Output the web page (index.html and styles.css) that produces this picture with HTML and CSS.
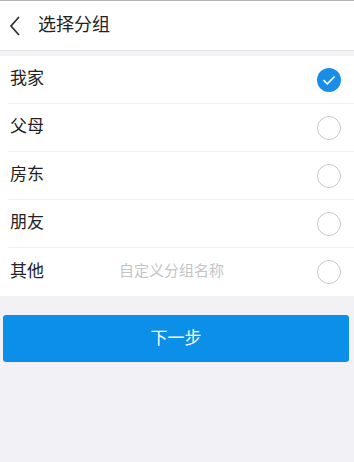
FILE: index.html
```html
<!DOCTYPE html>
<html lang="zh">
<head>
    <meta charset="utf-8">
    <title>选择分组</title>
    <meta content="width=device-width, initial-scale=1" name="viewport" />
    <link rel="stylesheet" href="styles.css">
</head>
<body>
    <header class="top-bar">
        <svg class="back" width="12" height="20" viewBox="0 0 12 20">
            <path d="M10 1 L2 10 L10 19" fill="none" stroke="#333" stroke-width="1.8" />
        </svg>
        <h1>选择分组</h1>
    </header>
    <ul class="group-list">
        <li class="group-item">
            <span class="name">我家</span>
            <span class="check checked">
                <svg width="24" height="24" viewBox="0 0 24 24">
                    <circle cx="12" cy="12" r="12" fill="#1a8ee6" />
                    <path d="M6.5 12.2 L10.3 15.8 L17.5 8.6" fill="none" stroke="#fff" stroke-width="1.6" />
                </svg>
            </span>
        </li>
        <li class="group-item">
            <span class="name">父母</span>
            <span class="check"></span>
        </li>
        <li class="group-item">
            <span class="name">房东</span>
            <span class="check"></span>
        </li>
        <li class="group-item">
            <span class="name">朋友</span>
            <span class="check"></span>
        </li>
        <li class="group-item">
            <span class="name short">其他</span>
            <input class="custom" type="text" placeholder="自定义分组名称">
            <span class="check"></span>
        </li>
    </ul>
    <div class="actions">
        <button class="next-btn">下一步</button>
    </div>
</body>
</html>
```
FILE: styles.css
```css
body {
    margin: 0;
    background: #f2f2f6;
    font-family: "Noto Sans CJK SC", "Noto Sans", sans-serif;
    color: #222;
    border-top: 1px solid #b5b5b5;
}
.top-bar {
    display: flex;
    align-items: center;
    height: 49px;
    background: #fff;
    border-bottom: 1px solid #e2e2e2;
    padding-left: 9px;
}
.top-bar .back {
    margin-right: 17px;
}
.top-bar h1 {
    margin: 0 0 5px;
    font-size: 18px;
    font-weight: normal;
    color: #222;
}
.group-list {
    list-style: none;
    margin: 5px 0 0;
    padding: 0 0 0 8px;
    background: #fff;
}
.group-item {
    display: flex;
    align-items: center;
    height: 48px;
    padding-right: 13px;
    border-bottom: 1px solid #f0f0f0;
    box-sizing: border-box;
}
.group-item:last-child {
    border-bottom: none;
}
.group-item .name {
    font-size: 17px;
    padding-left: 2px;
    margin-bottom: 6px;
    flex: 1;
}
.group-item .name.short {
    flex: 0 0 111px;
    box-sizing: border-box;
}
.group-item .custom {
    flex: 1;
    min-width: 0;
    border: none;
    outline: none;
    font-family: inherit;
    font-size: 15px;
    padding: 0;
    margin-bottom: 5px;
    background: transparent;
}
.group-item .custom::placeholder {
    color: #c4c4c4;
}
.check {
    width: 22px;
    height: 22px;
    border: 1px solid #c8c8c8;
    border-radius: 50%;
    display: flex;
}
.check.checked {
    border: none;
    width: 24px;
    height: 24px;
}
.actions {
    padding: 19px 5px 19px 3px;
}
.next-btn {
    width: 100%;
    height: 47px;
    border: none;
    border-radius: 3px;
    background: #0b8fe8;
    color: #fff;
    font-family: inherit;
    font-size: 17px;
    padding-bottom: 5px;
}
```
